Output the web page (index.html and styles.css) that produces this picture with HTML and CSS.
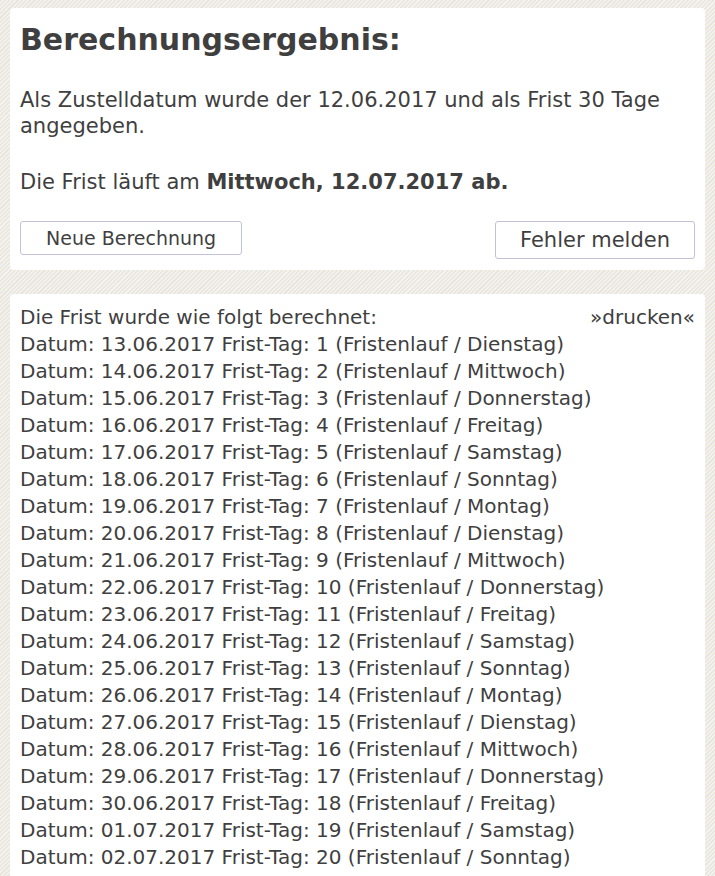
FILE: index.html
```html
<!DOCTYPE html>
<html lang="de">

<head>
    <meta charset="UTF-8">
    <meta name="viewport" content="width=device-width, initial-scale=1.0">
    <title>Fristenrechner</title>
    <link rel="stylesheet" href="styles.css">
</head>

<body>
    <div class="page">
        <div class="card result">
            <h1>Berechnungsergebnis:</h1>
            <p class="info">Als Zustelldatum wurde der 12.06.2017 und als Frist 30 Tage angegeben.</p>
            <p class="info end">Die Frist läuft am <b>Mittwoch, 12.07.2017 ab.</b></p>
            <div class="actions">
                <button class="btn btn-new">Neue Berechnung</button>
                <button class="btn btn-error">Fehler melden</button>
            </div>
        </div>

        <div class="card steps">
            <div class="steps-head">
                <span>Die Frist wurde wie folgt berechnet:</span>
                <a href="#" class="print">»drucken«</a>
            </div>
            <div class="row">Datum: 13.06.2017 Frist-Tag: 1 (Fristenlauf / Dienstag)</div>
            <div class="row">Datum: 14.06.2017 Frist-Tag: 2 (Fristenlauf / Mittwoch)</div>
            <div class="row">Datum: 15.06.2017 Frist-Tag: 3 (Fristenlauf / Donnerstag)</div>
            <div class="row">Datum: 16.06.2017 Frist-Tag: 4 (Fristenlauf / Freitag)</div>
            <div class="row">Datum: 17.06.2017 Frist-Tag: 5 (Fristenlauf / Samstag)</div>
            <div class="row">Datum: 18.06.2017 Frist-Tag: 6 (Fristenlauf / Sonntag)</div>
            <div class="row">Datum: 19.06.2017 Frist-Tag: 7 (Fristenlauf / Montag)</div>
            <div class="row">Datum: 20.06.2017 Frist-Tag: 8 (Fristenlauf / Dienstag)</div>
            <div class="row">Datum: 21.06.2017 Frist-Tag: 9 (Fristenlauf / Mittwoch)</div>
            <div class="row">Datum: 22.06.2017 Frist-Tag: 10 (Fristenlauf / Donnerstag)</div>
            <div class="row">Datum: 23.06.2017 Frist-Tag: 11 (Fristenlauf / Freitag)</div>
            <div class="row">Datum: 24.06.2017 Frist-Tag: 12 (Fristenlauf / Samstag)</div>
            <div class="row">Datum: 25.06.2017 Frist-Tag: 13 (Fristenlauf / Sonntag)</div>
            <div class="row">Datum: 26.06.2017 Frist-Tag: 14 (Fristenlauf / Montag)</div>
            <div class="row">Datum: 27.06.2017 Frist-Tag: 15 (Fristenlauf / Dienstag)</div>
            <div class="row">Datum: 28.06.2017 Frist-Tag: 16 (Fristenlauf / Mittwoch)</div>
            <div class="row">Datum: 29.06.2017 Frist-Tag: 17 (Fristenlauf / Donnerstag)</div>
            <div class="row">Datum: 30.06.2017 Frist-Tag: 18 (Fristenlauf / Freitag)</div>
            <div class="row">Datum: 01.07.2017 Frist-Tag: 19 (Fristenlauf / Samstag)</div>
            <div class="row">Datum: 02.07.2017 Frist-Tag: 20 (Fristenlauf / Sonntag)</div>
        </div>
    </div>
</body>

</html>
```

FILE: styles.css
```css
* {
    box-sizing: border-box;
}

html,
body {
    margin: 0;
    padding: 0;
}

body {
    font-family: "DejaVu Sans", Verdana, sans-serif;
    color: #3f3f3f;
    background-color: #efece6;
    background-image: repeating-linear-gradient(135deg, #e9e6de 0, #e9e6de 1.5px, #f4f2ee 1.5px, #f4f2ee 3px);
}

.page {
    padding: 8px 10px;
}

.card {
    background: #fff;
    border-radius: 4px;
    padding: 10px 10px 11px;
}

.card+.card {
    margin-top: 24px;
}

h1 {
    font-size: 30px;
    line-height: 35px;
    margin: 4px 0 0;
}

.info {
    font-size: 21px;
    line-height: 26px;
    margin: 30px 0 0;
}

.actions {
    display: flex;
    justify-content: space-between;
    align-items: flex-start;
    margin-top: 26px;
}

.btn {
    font-family: inherit;
    color: #3f3f3f;
    background: #fff;
    border: 1px solid #c3c0da;
    border-radius: 3px;
    padding: 5px 25px;
    line-height: normal;
    cursor: pointer;
}

.btn-new {
    font-size: 19px;
}

.btn-error {
    font-size: 21px;
    padding: 6px 24px;
}

.steps {
    font-size: 20px;
    line-height: 27px;
}

.steps-head {
    display: flex;
    justify-content: space-between;
}

.print {
    color: #3f3f3f;
    text-decoration: none;
}
```
